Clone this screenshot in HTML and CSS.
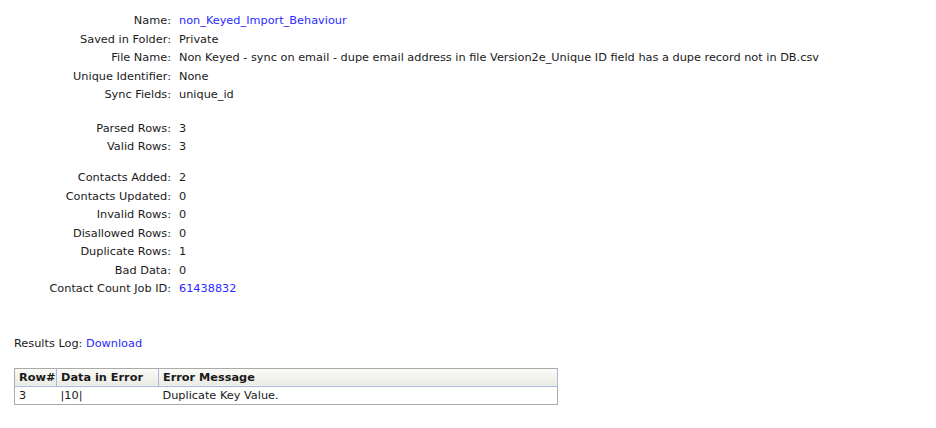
FILE: index.html
```html
<!DOCTYPE html>
<html>
<head>
<meta charset="utf-8">
<link rel="stylesheet" href="styles.css">
</head>
<body>
<div class="page">
  <div class="details">
    <div class="group g1">
      <div class="lbl">Name:</div><div class="val"><a href="#">non_Keyed_Import_Behaviour</a></div>
      <div class="lbl">Saved in Folder:</div><div class="val">Private</div>
      <div class="lbl">File Name:</div><div class="val">Non Keyed - sync on email - dupe email address in file Version2e_Unique ID field has a dupe record not in DB.csv</div>
      <div class="lbl">Unique Identifier:</div><div class="val">None</div>
      <div class="lbl">Sync Fields:</div><div class="val">unique_id</div>
    </div>
    <div class="group g2">
      <div class="lbl">Parsed Rows:</div><div class="val">3</div>
      <div class="lbl">Valid Rows:</div><div class="val">3</div>
    </div>
    <div class="group g3">
      <div class="lbl">Contacts Added:</div><div class="val">2</div>
      <div class="lbl">Contacts Updated:</div><div class="val">0</div>
      <div class="lbl">Invalid Rows:</div><div class="val">0</div>
      <div class="lbl">Disallowed Rows:</div><div class="val">0</div>
      <div class="lbl">Duplicate Rows:</div><div class="val">1</div>
      <div class="lbl">Bad Data:</div><div class="val">0</div>
      <div class="lbl">Contact Count Job ID:</div><div class="val"><a href="#">61438832</a></div>
    </div>
  </div>
  <div class="results">Results Log: <a href="#">Download</a></div>
  <table class="errors">
    <colgroup><col class="w1"><col class="w2"><col></colgroup>
    <thead>
      <tr><th>Row#</th><th>Data in Error</th><th>Error Message</th></tr>
    </thead>
    <tbody>
      <tr><td>3</td><td>|10|</td><td>Duplicate Key Value.</td></tr>
    </tbody>
  </table>
</div>
</body>
</html>
```
FILE: styles.css
```css
html, body { margin: 0; padding: 0; background: #fff; }
body {
  font-family: "DejaVu Sans", Verdana, sans-serif;
  font-size: 11.3px;
  color: #1a1a1a;
}
a { color: #2a2aff; text-decoration: none; }
.page { padding: 12px 14px 0 14px; }
.details { display: flex; flex-direction: column; }
.group {
  display: grid;
  grid-template-columns: 157px auto;
  column-gap: 8px;
}
.g2 { margin-top: 15px; }
.g3 { margin-top: 12.5px; }
.lbl, .val { height: 18.5px; line-height: 18.5px; white-space: nowrap; }
.lbl { text-align: right; }
.results { margin-top: 36px; line-height: 18px; }
.errors {
  margin-top: 15px;
  width: 544px;
  table-layout: fixed;
  border-collapse: collapse;
  border: 1px solid #aaa;
}
.w1 { width: 42px; }
.w2 { width: 102px; }
.errors th {
  text-align: left;
  font-weight: bold;
  height: 17px;
  padding: 0 4px;
  background: linear-gradient(#fbfbf8, #ebebe4);
  border-bottom: 1px solid #a9b9e3;
  border-right: 1px solid #a9b9e3;
}
.errors td { height: 17px; padding: 0 4px; }
```
